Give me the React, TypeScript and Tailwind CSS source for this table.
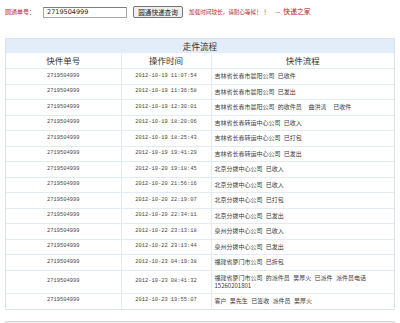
import React from "react";

type Row = { time: string; info: React.ReactNode };

const NUMBER = "2719504999";

const rows: Row[] = [
  { time: "2012-10-19 11:07:54", info: "吉林省长春市晨阳公司 已收件" },
  { time: "2012-10-19 11:36:58", info: "吉林省长春市晨阳公司 已发出" },
  { time: "2012-10-19 12:30:01", info: "吉林省长春市晨阳公司 的收件员\u00a0 曲洪涛\u00a0 已收件" },
  { time: "2012-10-19 18:20:06", info: "吉林省长春转运中心公司 已收入" },
  { time: "2012-10-19 18:25:43", info: "吉林省长春转运中心公司 已打包" },
  { time: "2012-10-19 19:41:29", info: "吉林省长春转运中心公司 已发出" },
  { time: "2012-10-20 19:18:45", info: "北京分拨中心公司 已收入" },
  { time: "2012-10-20 21:56:16", info: "北京分拨中心公司 已收入" },
  { time: "2012-10-20 22:19:07", info: "北京分拨中心公司 已打包" },
  { time: "2012-10-20 22:34:11", info: "北京分拨中心公司 已发出" },
  { time: "2012-10-22 23:13:18", info: "泉州分拨中心公司 已收入" },
  { time: "2012-10-22 23:13:44", info: "泉州分拨中心公司 已发出" },
  { time: "2012-10-23 04:19:38", info: "福建省厦门市公司 已拆包" },
  {
    time: "2012-10-23 08:41:32",
    info: (
      <>
        福建省厦门市公司 的派件员 吴厚火 已派件 派件员电话
        <br />
        15260201801
      </>
    ),
  },
  { time: "2012-10-23 19:55:07", info: "客户 吴先生 已签收 派件员 吴厚火" },
];

const cjk = "font-['Noto_Sans_CJK_SC',sans-serif]";
const mono = "font-['Liberation_Mono','Noto_Sans_CJK_SC',monospace]";

export default function App() {
  return (
    <div className={`w-[400px] h-[323px] overflow-hidden bg-white text-[#333] ${cjk}`}>
      {/* search bar */}
      <div className="flex items-center h-[24px] pl-[5px]">
        <span className="text-[6px] leading-none text-[#b3262b] w-[30px] whitespace-nowrap">圆通单号：</span>
        <div className="ml-[8px] w-[84px] h-[11px] border border-[#a5a5a5] border-t-[#7f7f7f] bg-white flex items-center pl-[3px]">
          <span className="font-['DejaVu_Sans',sans-serif] text-[6.5px] leading-none text-[#222]">{NUMBER}</span>
        </div>
        <button className="ml-[6px] w-[50px] h-[12px] border border-[#777] rounded-[2px] bg-[#efefef] text-[6.6px] leading-none text-[#222] flex items-center justify-center">
          圆通快递查询
        </button>
        <span className="ml-[6px] text-[5.6px] leading-none text-[#b3262b] whitespace-nowrap">
          加载时间较长，请耐心等候！<span className="ml-[2px]">！</span>
          <span className="ml-[6px]">—</span>
          <span className="ml-[3px] text-[6.8px]">快递之家</span>
        </span>
      </div>

      {/* tracking table */}
      <div className="mt-[14px] mx-[5px] w-[390px] border border-[#d6e2ec]">
        <div className="h-[14px] bg-[#e2edf9] flex items-center justify-center text-[8.6px] leading-none text-[#333]">
          走件流程
        </div>
        <table className="w-full border-collapse table-fixed">
          <colgroup>
            <col className="w-[115px]" />
            <col className="w-[90px]" />
            <col />
          </colgroup>
          <thead>
            <tr className="h-[15.5px]">
              <th className="font-normal text-[8.5px] leading-none text-[#333] border-r border-b border-[#e3eaf0]">快件单号</th>
              <th className="font-normal text-[8.5px] leading-none text-[#333] border-r border-b border-[#e3eaf0]">操作时间</th>
              <th className="font-normal text-[8.5px] leading-none text-[#333] border-b border-[#e3eaf0]">快件流程</th>
            </tr>
          </thead>
          <tbody>
            {rows.map((r, i) => (
              <tr key={i} className="h-[15.5px]">
                <td className={`${mono} text-[5.4px] leading-none text-center text-[#4a4a4a] border-r border-[#e3eaf0] ${i < rows.length - 1 ? "border-b" : ""}`}>
                  {NUMBER}
                </td>
                <td className={`${mono} text-[5.4px] leading-none text-center text-[#4a4a4a] border-r border-[#e3eaf0] ${i < rows.length - 1 ? "border-b" : ""}`}>
                  {r.time}
                </td>
                <td className={`text-[6px] leading-[8px] pl-[3px] py-[3px] text-[#3a3a3a] [word-spacing:2px] border-[#e3eaf0] ${i < rows.length - 1 ? "border-b" : ""}`}>
                  {r.info}
                </td>
              </tr>
            ))}
          </tbody>
        </table>
      </div>

      {/* footer strip */}
      <div className="mt-[11px] mx-[5px] h-[10px] bg-[#ebebeb] border-t border-[#dadada]" />
    </div>
  );
}
